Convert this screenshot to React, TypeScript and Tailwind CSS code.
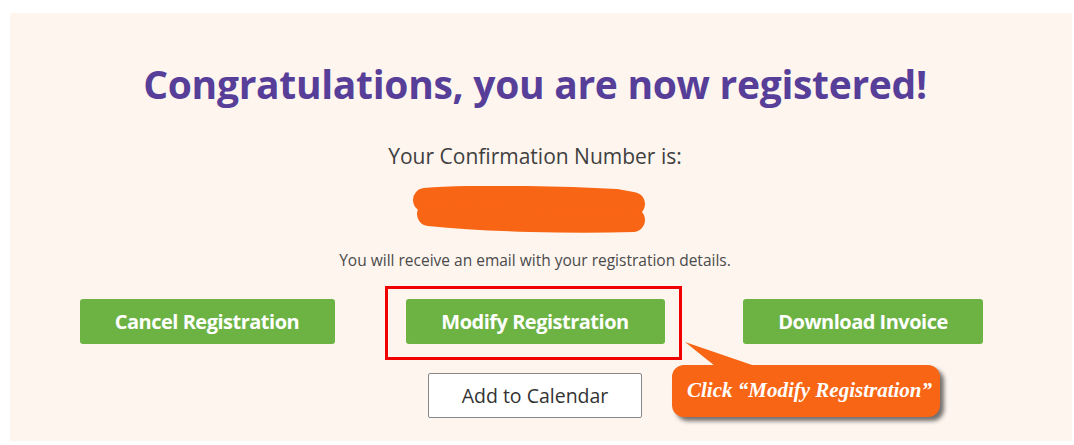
import React from 'react';

const btnGreen =
  'h-[45px] rounded-[3px] bg-[#6cb344] text-white font-bold text-[20px] tracking-[-0.5px] flex items-center justify-center';

export default function App() {
  return (
    <div className="min-h-[445px] bg-white pt-[13px] pl-[10px] pr-[2px] font-['Open_Sans',sans-serif]">
      <div className="h-[428px] bg-[#fef5ef] pl-[33px] pr-[45px]">
        <div className="relative flex flex-col items-center w-[984px]">
          <h1 className="mt-[43px] text-[39px] leading-[56px] font-bold text-[#573f99] tracking-[-0.3px]">
            Congratulations, you are now registered!
          </h1>
          <p className="mt-[30px] text-[21px] leading-[28px] text-[#404040]">Your Confirmation Number is:</p>

          <svg width="250" height="56" viewBox="0 0 250 56" className="mt-[16px] ml-[2px]">
            <path
              d="M14 14 C60 10 150 12 205 15 L222 18"
              stroke="#f86514"
              strokeWidth="24"
              strokeLinecap="round"
              fill="none"
            />
            <path
              d="M18 28 C80 34 160 36 222 34"
              stroke="#f86514"
              strokeWidth="24"
              strokeLinecap="round"
              fill="none"
            />
          </svg>

          <p className="mt-[8px] text-[15.5px] leading-[20px] text-[#4a4a4a]">
            You will receive an email with your registration details.
          </p>

          <div className="mt-[29px] grid grid-cols-3 w-full">
            <div className="flex justify-center">
              <button className={`${btnGreen} w-[255px]`}>Cancel Registration</button>
            </div>
            <div className="relative flex justify-center">
              <button className={`${btnGreen} w-[259px]`}>Modify Registration</button>
              <div className="absolute left-[14px] top-[-13px] w-[297px] h-[74px] border-[3px] border-[#f00000]" />
            </div>
            <div className="flex justify-center">
              <button className={`${btnGreen} w-[240px]`}>Download Invoice</button>
            </div>
          </div>

          <button className="mt-[29px] w-[214px] h-[45px] bg-white border border-[#888] rounded-[2px] text-[19.5px] text-[#333]">
            Add to Calendar
          </button>

          <div className="absolute left-[629px] top-[329px]">
            <svg width="80" height="40" viewBox="0 0 80 40" className="absolute left-[13px] top-0">
              <polygon points="0,0 70,24 30,24" fill="#f86514" />
            </svg>
            <div className="mt-[23px] w-[268px] h-[52px] rounded-[12px] bg-[#f86514] shadow-[4px_4px_4px_rgba(0,0,0,0.55)] flex items-center pl-[15px] font-['Liberation_Serif',serif] italic font-bold text-white text-[21px]">
              Click “Modify Registration”
            </div>
          </div>
        </div>
      </div>
    </div>
  );
}
